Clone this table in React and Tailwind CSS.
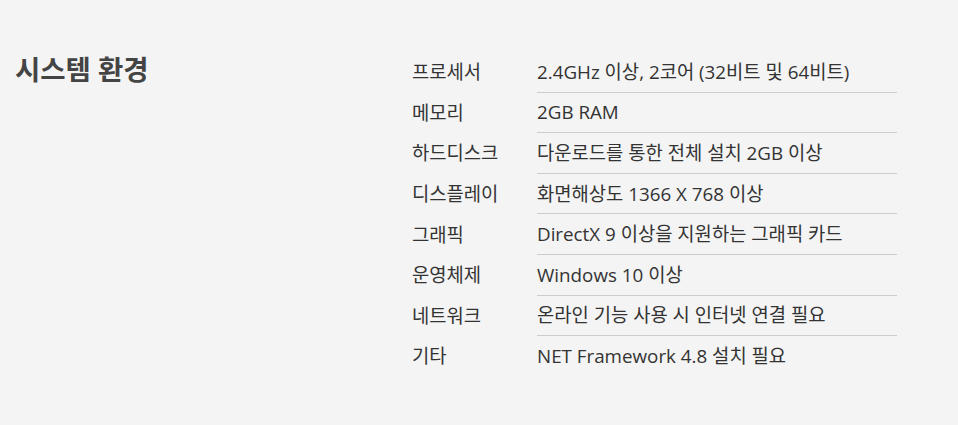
const specs = [
  ["프로세서", "2.4GHz 이상, 2코어 (32비트 및 64비트)"],
  ["메모리", "2GB RAM"],
  ["하드디스크", "다운로드를 통한 전체 설치 2GB 이상"],
  ["디스플레이", "화면해상도 1366 X 768 이상"],
  ["그래픽", "DirectX 9 이상을 지원하는 그래픽 카드"],
  ["운영체제", "Windows 10 이상"],
  ["네트워크", "온라인 기능 사용 시 인터넷 연결 필요"],
  ["기타", "NET Framework 4.8 설치 필요"],
];

export default function App() {
  return (
    <div
      className="w-[958px] h-[425px] bg-[#f4f4f4] flex px-[15px] pt-[52px]"
      style={{ fontFamily: '"Open Sans", "Noto Sans CJK KR", sans-serif' }}
    >
      <h2 className="w-[397px] shrink-0 text-[27.5px] leading-[36px] font-bold text-[#444]">
        시스템 환경
      </h2>
      <div className="w-[485px] text-[18.8px] leading-[24px] text-[#333]">
        {specs.map(([label, value], i) => (
          <div key={label} className="flex h-[40.6px]">
            <div className="w-[125px] shrink-0 flex items-center">{label}</div>
            <div
              className={
                "flex-1 flex items-center border-b " +
                (i < specs.length - 1 ? "border-[#cccccc]" : "border-transparent")
              }
            >
              {value}
            </div>
          </div>
        ))}
      </div>
    </div>
  );
}
